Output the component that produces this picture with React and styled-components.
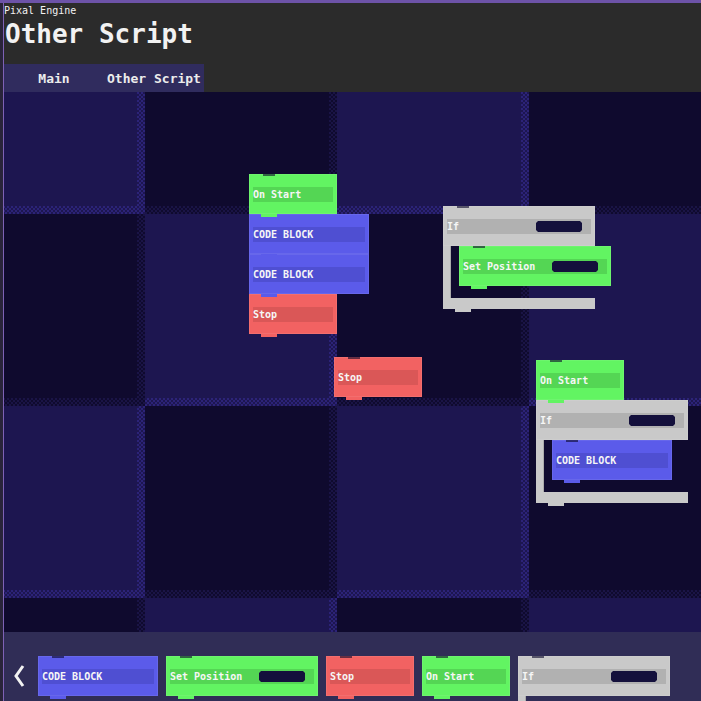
import styled, { createGlobalStyle } from 'styled-components'

const GlobalStyle = createGlobalStyle`
  html, body {
    margin: 0;
    padding: 0;
    background: #29243a;
  }
  body {
    font-family: "DejaVu Sans Mono", "Liberation Mono", monospace;
  }
`

const colors = {
  green: { base: '#62f462', strip: '#54d654' },
  blue: { base: '#5b5bea', strip: '#4f4fd2' },
  red: { base: '#f26262', strip: '#da5757' },
  gray: { base: '#c9c9c9', strip: '#b1b1b1' },
}

const Frame = styled.div`
  width: 701px;
  height: 701px;
  box-sizing: border-box;
  overflow: hidden;
  border-top: 3px solid #6d53a8;
  padding-left: 3px;
  background: #29243a;
  display: flex;
`

const Shell = styled.div`
  flex: 1;
  min-width: 0;
  border-left: 1px solid #7e62b6;
  display: flex;
  flex-direction: column;
`

const Header = styled.header`
  height: 61px;
  background: #2b2b2b;
  color: #f2f2f2;
  display: flex;
  flex-direction: column;
`

const AppName = styled.div`
  font-size: 10px;
  line-height: 12px;
  margin-top: 2px;
`

const Title = styled.h1`
  margin: 1px 0 0 1px;
  font-size: 26px;
  line-height: 32px;
  font-weight: bold;
`

const TabRow = styled.nav`
  height: 28px;
  background: #2b2b2b;
  display: flex;
`

const TabStrip = styled.div`
  display: flex;
  background: #302c5e;
`

const Tab = styled.div`
  width: 100px;
  display: flex;
  align-items: center;
  justify-content: center;
  color: #ececec;
  font-size: 13px;
  font-weight: bold;
`

const Canvas = styled.main`
  flex: 1;
  position: relative;
  overflow: hidden;
  background: #0f0a2e;
`

const TileGrid = styled.div`
  display: grid;
  grid-template-columns: repeat(5, 192px);
  grid-template-rows: repeat(4, 192px);
  margin: -70px 0 0 -51px;
`

const Tile = styled.div`
  padding: 0 8px 8px 0;
  background: ${p => (p.$light
    ? 'repeating-conic-gradient(#2c2378 0 25%, #1d1650 0 50%) 0 0 / 4px 4px'
    : 'repeating-conic-gradient(#1a1446 0 25%, #0f0a2e 0 50%) 0 0 / 4px 4px')};
`

const TileFill = styled.div`
  width: 100%;
  height: 100%;
  background: ${p => (p.$light ? '#1d1650' : '#0f0a2e')};
`

const Node = styled.div`
  position: absolute;
  left: ${p => p.$x}px;
  top: ${p => p.$y}px;
  display: flex;
  flex-direction: column;
  align-items: flex-start;
`

const BlockShell = styled.div`
  position: relative;
  width: ${p => p.$w}px;
  flex-shrink: 0;
  display: flex;
  flex-direction: column;
  &::before {
    content: '';
    position: absolute;
    top: 0;
    left: 14px;
    width: 12px;
    height: 2px;
    background: rgba(10, 6, 40, 0.6);
    z-index: 1;
  }
  &::after {
    content: '';
    position: absolute;
    bottom: -3px;
    left: 12px;
    width: 16px;
    height: 3px;
    background: ${p => p.$base};
    z-index: 2;
  }
`

const Head = styled.div`
  height: 40px;
  box-sizing: border-box;
  padding: 13px 4px 0;
  background: ${p => p.$base};
  box-shadow: inset 0 0 0 1px rgba(255, 255, 255, 0.08);
`

const Strip = styled.div`
  height: 15px;
  background: ${p => p.$strip};
  display: flex;
  align-items: center;
  justify-content: space-between;
  color: #f6f6f6;
  font-size: 10px;
  font-weight: bold;
  white-space: nowrap;
`

const Input = styled.span`
  width: 46px;
  height: 11px;
  margin-right: 9px;
  background: #14103c;
  clip-path: polygon(2px 0, calc(100% - 2px) 0, 100% 2px, 100% calc(100% - 2px), calc(100% - 2px) 100%, 2px 100%, 0 calc(100% - 2px), 0 2px);
`

const Body = styled.div`
  display: flex;
  height: 52px;
`

const Arm = styled.div`
  width: 8px;
  flex-shrink: 0;
  background: ${p => p.$base};
  box-shadow: inset -1px 0 0 rgba(0, 0, 0, 0.15);
`

const Slot = styled.div`
  flex: 1;
  min-width: 0;
  padding-left: 8px;
  display: flex;
  align-items: flex-start;
`

const Foot = styled.div`
  height: 11px;
  background: ${p => p.$base};
`

const Palette = styled.footer`
  height: 69px;
  flex-shrink: 0;
  background: #302d56;
  box-sizing: border-box;
  padding: 24px 0 0 8px;
  display: flex;
  align-items: flex-start;
  gap: 8px;
  overflow: hidden;
`

const Back = styled.button`
  width: 14px;
  height: 40px;
  margin-right: 4px;
  padding: 0;
  border: 0;
  background: none;
  display: flex;
  align-items: center;
  justify-content: center;
`

function Block({ label, color, width, input, wrap, children }) {
  const c = colors[color]
  return (
    <BlockShell $w={width} $base={c.base}>
      <Head $base={c.base}>
        <Strip $strip={c.strip}>
          {label}
          {input && <Input />}
        </Strip>
      </Head>
      {wrap && (
        <>
          <Body>
            <Arm $base={c.base} />
            <Slot>{children}</Slot>
          </Body>
          <Foot $base={c.base} />
        </>
      )}
    </BlockShell>
  )
}

const OnStart = () => <Block label="On Start" color="green" width={88} />
const CodeBlock = () => <Block label="CODE BLOCK" color="blue" width={120} />
const Stop = () => <Block label="Stop" color="red" width={88} />
const SetPosition = () => <Block label="Set Position" color="green" width={152} input />
const If = ({ children }) => (
  <Block label="If" color="gray" width={152} input wrap>
    {children}
  </Block>
)

const tiles = Array.from({ length: 20 }, (_, i) => (Math.floor(i / 5) + (i % 5)) % 2 === 0)

export default function App() {
  return (
    <>
      <GlobalStyle />
      <Frame>
        <Shell>
          <Header>
            <AppName>Pixal Engine</AppName>
            <Title>Other Script</Title>
          </Header>
          <TabRow>
            <TabStrip>
              <Tab>Main</Tab>
              <Tab>Other Script</Tab>
            </TabStrip>
          </TabRow>
          <Canvas>
            <TileGrid>
              {tiles.map((light, i) => (
                <Tile key={`tile_${i}`} $light={light}>
                  <TileFill $light={light} />
                </Tile>
              ))}
            </TileGrid>
            <Node $x={245} $y={82}>
              <OnStart />
              <CodeBlock />
              <CodeBlock />
              <Stop />
            </Node>
            <Node $x={439} $y={114}>
              <If>
                <SetPosition />
              </If>
            </Node>
            <Node $x={330} $y={265}>
              <Stop />
            </Node>
            <Node $x={532} $y={268}>
              <OnStart />
              <If>
                <CodeBlock />
              </If>
            </Node>
          </Canvas>
          <Palette>
            <Back aria-label="back">
              <svg width="14" height="24" viewBox="0 0 14 24">
                <polyline points="11,2 4,12 11,22" fill="none" stroke="#f2f2f2" strokeWidth="3" strokeLinejoin="miter" />
              </svg>
            </Back>
            <CodeBlock />
            <SetPosition />
            <Stop />
            <OnStart />
            <If />
          </Palette>
        </Shell>
      </Frame>
    </>
  )
}
